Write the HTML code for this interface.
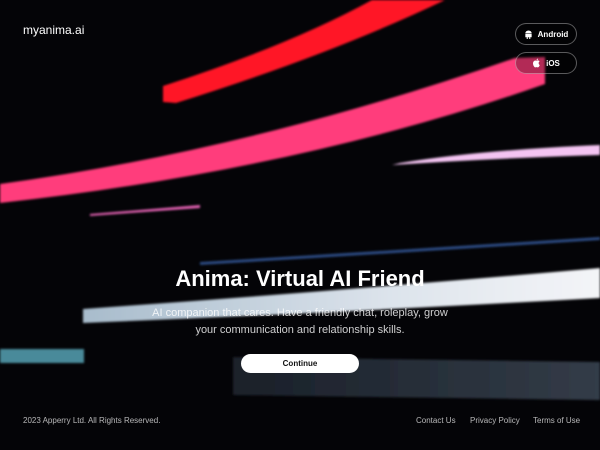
<!DOCTYPE html>
<html><head><meta charset="utf-8"><style>
*{margin:0;padding:0;box-sizing:border-box}
body{width:600px;height:450px;overflow:hidden;background:#040407;font-family:"Liberation Sans",sans-serif;color:#fff;position:relative}
svg.bg{position:absolute;left:0;top:0}
.logo{position:absolute;left:23px;top:23px;font-size:12px}
.btn{position:absolute;left:515px;width:62px;height:22px;border:1px solid rgba(255,255,255,.35);border-radius:11px;font-size:8px;font-weight:bold;display:flex;align-items:center;justify-content:center;gap:5px;background:rgba(0,0,0,.3)}
h1{position:absolute;left:0;width:600px;top:266px;text-align:center;font-size:22px;font-weight:bold}
.sub{position:absolute;left:0;width:600px;top:305px;text-align:center;font-size:11px;line-height:17px;color:rgba(255,255,255,.8)}
.cont{position:absolute;left:241px;top:354px;width:118px;height:19px;background:#fff;border-radius:10px;color:#111;font-size:8px;font-weight:bold;display:flex;align-items:center;justify-content:center}
.foot{position:absolute;top:416px;font-size:8px;color:rgba(255,255,255,.7)}
</style></head><body>
<svg class="bg" width="600" height="450" viewBox="0 0 600 450">
<defs>
<filter id="b"><feGaussianBlur stdDeviation="1"/></filter>
<linearGradient id="pan" x1="0" x2="1"><stop offset="0" stop-color="#1a2029"/><stop offset="1" stop-color="#333c48"/></linearGradient>
<linearGradient id="wb" x1="0" x2="1"><stop offset="0" stop-color="#a8bccc"/><stop offset="0.6" stop-color="#dde4ec"/><stop offset="1" stop-color="#f4f5f8"/></linearGradient>
</defs>
<g filter="url(#b)">
<path d="M163 86 Q290 45 372 0 L445 0 Q330 55 176 103 L163 102 Z" fill="#ff1628"/>
<path d="M0 184 Q250 150 515 58 L545 57 L545 84 Q300 170 0 203 Z" fill="#ff3c7c"/>
<path d="M400 163 Q480 150 600 145 L600 155 Q500 158 392 165 Z" fill="#f4c4f2"/>
<path d="M90 214 L200 205 L200 208 L90 216 Z" fill="#e060b0"/>
<path d="M83 309 Q350 290 600 268 L600 298 Q350 312 83 323 Z" fill="url(#wb)"/>
<path d="M200 262 Q400 250 600 237 L600 240 Q400 253 200 265 Z" fill="#2a4880"/>
<rect x="0" y="349" width="84" height="14" fill="#4a8a9a"/>
<path d="M233 357 L600 362 L600 400 L233 395 Z" fill="url(#pan)"/>
</g>
</svg>
<div class="logo">myanima.ai</div>
<div class="btn" style="top:23px"><svg width="9" height="9" viewBox="0 0 10 10"><path d="M1.5 4h7v4h-7z M1.5 3.5a3.5 3 0 0 1 7 0z M3 8h1.2v2H3z M5.8 8H7v2H5.8z" fill="#fff"/></svg>Android</div>
<div class="btn" style="top:52px"><svg width="9" height="10" viewBox="0 0 10 11"><path d="M5 3Q7 2 8.5 3.5Q7 4.5 7.5 6.5Q8 7.5 8.6 7.8Q7.5 10.5 6.3 10.3Q5 9.8 3.8 10.3Q2.5 10.5 1.5 8Q0.5 5 2 3.5Q3.5 2.2 5 3Z M5 2.5Q5.2 0.8 6.8 0.5Q6.6 2.2 5 2.5Z" fill="#fff"/></svg>iOS</div>
<h1>Anima: Virtual AI Friend</h1>
<div class="sub">AI companion that cares. Have a friendly chat, roleplay, grow<br>your communication and relationship skills.</div>
<div class="cont">Continue</div>
<div class="foot" style="left:23px">2023 Apperry Ltd. All Rights Reserved.</div>
<div class="foot" style="left:416px">Contact Us</div>
<div class="foot" style="left:470px">Privacy Policy</div>
<div class="foot" style="left:533px">Terms of Use</div>
</body></html>
